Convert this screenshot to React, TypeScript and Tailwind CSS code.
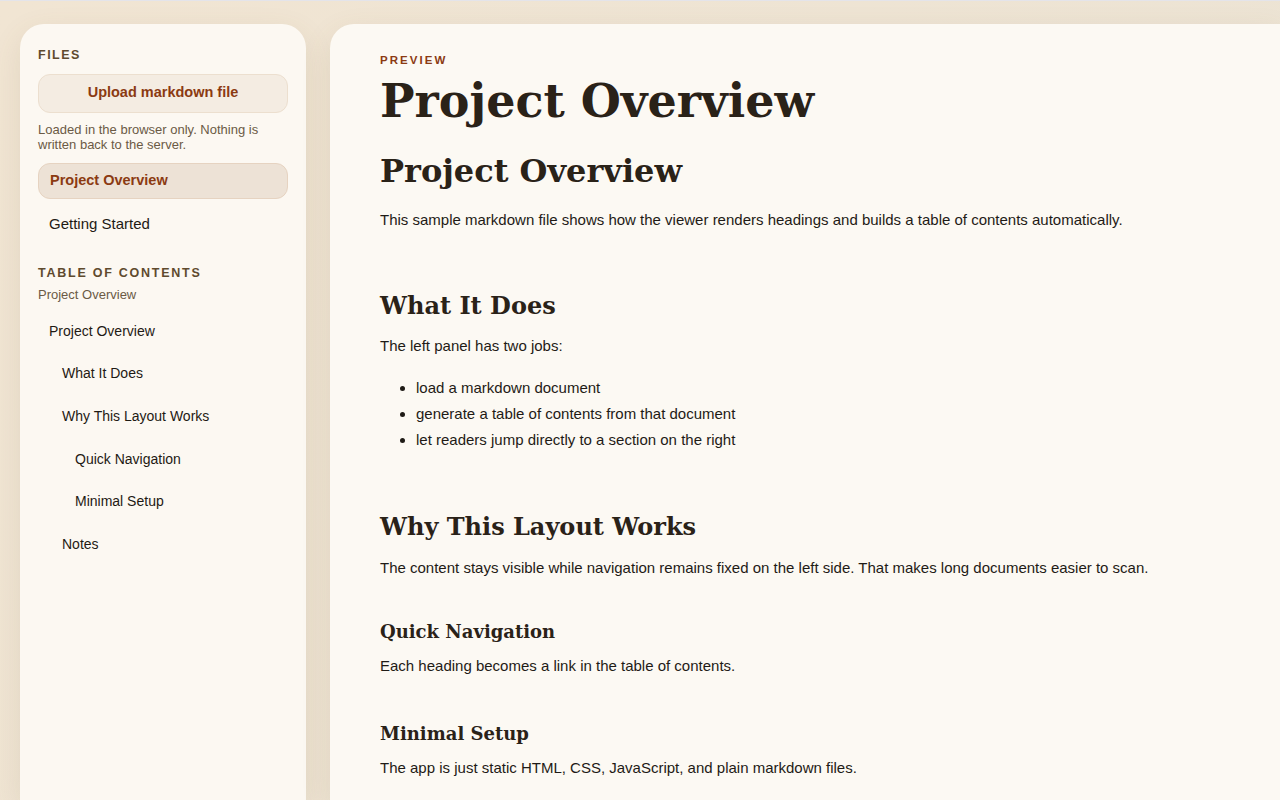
const files = [
  { name: 'Project Overview', active: true },
  { name: 'Getting Started', active: false },
]

const toc = [
  { label: 'Project Overview', level: 1 },
  { label: 'What It Does', level: 2 },
  { label: 'Why This Layout Works', level: 2 },
  { label: 'Quick Navigation', level: 3 },
  { label: 'Minimal Setup', level: 3 },
  { label: 'Notes', level: 2 },
]

const indent: Record<number, string> = {
  1: 'pl-[11px]',
  2: 'pl-[24px]',
  3: 'pl-[37px]',
}

const serif = "font-['DejaVu_Serif',Georgia,serif]"

function Sidebar() {
  return (
    <aside className="w-[286px] shrink-0 rounded-t-[24px] bg-[#fcf8f2] px-[18px] pt-[22px] shadow-[0_10px_30px_rgba(120,95,60,0.12)]">
      <h3 className="text-[12.5px] font-bold uppercase tracking-[0.12em] text-[#5f4a2e]">Files</h3>
      <button className="mt-[9px] h-[39px] w-full rounded-[12px] border border-[#ecdfcf] bg-[#f4ece2] text-[14.5px] font-bold text-[#8b3a12]">
        Upload markdown file
      </button>
      <p className="mt-[9px] text-[13px] leading-[15px] text-[#6b5a45]">
        Loaded in the browser only. Nothing is written back to the server.
      </p>
      <ul className="mt-[11px] space-y-[7px]">
        {files.map(f => (
          <li
            key={f.name}
            className={
              f.active
                ? 'flex h-[36px] items-center rounded-[12px] border border-[#e6d3c1] bg-[#ede2d6] px-[11px] text-[14.5px] font-bold text-[#8b3a12]'
                : 'flex h-[36px] items-center px-[11px] text-[15px] text-[#1f1a14]'
            }
          >
            {f.name}
          </li>
        ))}
      </ul>
      <h3 className="mt-[22px] text-[12.5px] font-bold uppercase tracking-[0.14em] text-[#5f4a2e]">
        Table of contents
      </h3>
      <p className="mt-[2px] text-[13px] text-[#6b5a45]">Project Overview</p>
      <ul className="mt-[6px]">
        {toc.map(item => (
          <li key={item.label} className={`flex h-[42.6px] items-center text-[14px] text-[#1f1a14] ${indent[item.level]}`}>
            {item.label}
          </li>
        ))}
      </ul>
    </aside>
  )
}

function Preview() {
  return (
    <main className="min-w-0 flex-1 rounded-tl-[24px] bg-[#fcf9f3] pl-[50px] pt-[28px] text-[#1f1b16] shadow-[0_10px_30px_rgba(120,95,60,0.12)]">
      <p className="text-[11.5px] font-bold uppercase tracking-[0.18em] text-[#8b3a12]">Preview</p>
      <h1 className={`${serif} mt-[5px] text-[46px] leading-[54px] font-bold text-[#2a2218]`}>Project Overview</h1>

      <h2 className={`${serif} mt-[23px] text-[32px] leading-[40px] font-bold text-[#2a2218]`}>Project Overview</h2>
      <p className="mt-[18px] text-[15px] leading-[22px]">
        This sample markdown file shows how the viewer renders headings and builds a table of contents automatically.
      </p>

      <h2 className={`${serif} mt-[59px] text-[24px] leading-[32px] font-bold text-[#2a2218]`}>What It Does</h2>
      <p className="mt-[13px] text-[15px] leading-[22px]">The left panel has two jobs:</p>
      <ul className="mt-[18px] list-disc pl-[36px] text-[15px] leading-[26px]">
        <li>load a markdown document</li>
        <li>generate a table of contents from that document</li>
        <li>let readers jump directly to a section on the right</li>
      </ul>

      <h2 className={`${serif} mt-[58px] text-[24px] leading-[32px] font-bold text-[#2a2218]`}>Why This Layout Works</h2>
      <p className="mt-[14px] text-[15px] leading-[22px]">
        The content stays visible while navigation remains fixed on the left side. That makes long documents easier to scan.
      </p>

      <h3 className={`${serif} mt-[40px] text-[18px] leading-[26px] font-bold text-[#2a2218]`}>Quick Navigation</h3>
      <p className="mt-[10px] text-[15px] leading-[22px]">Each heading becomes a link in the table of contents.</p>

      <h3 className={`${serif} mt-[44px] text-[18px] leading-[26px] font-bold text-[#2a2218]`}>Minimal Setup</h3>
      <p className="mt-[10px] text-[15px] leading-[22px]">
        The app is just static HTML, CSS, JavaScript, and plain markdown files.
      </p>
    </main>
  )
}

export default function App() {
  return (
    <div className="flex h-[800px] gap-[24px] overflow-hidden border-t border-[#e4e4ea] bg-[linear-gradient(120deg,#f1e5d3,#ebe3d4)] pl-[20px] pt-[23px] font-['Liberation_Sans',Arial,sans-serif]">
      <Sidebar />
      <Preview />
    </div>
  )
}
